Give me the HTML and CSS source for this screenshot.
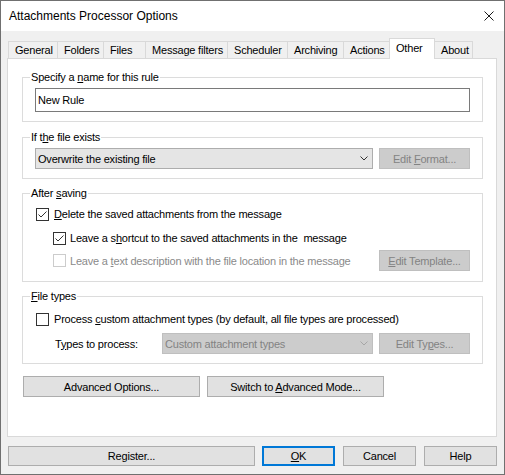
FILE: index.html
```html
<!DOCTYPE html>
<html>
<head>
<meta charset="utf-8">
<link rel="stylesheet" href="styles.css">
</head>
<body>
<div class="window">
  <div class="titlebar">
    <span class="title">Attachments Processor Options</span>
    <svg class="close" width="10" height="10" viewBox="0 0 10 10"><path d="M0.5 0.5L9.5 9.5M9.5 0.5L0.5 9.5" stroke="#1a1a1a" stroke-width="1"/></svg>
  </div>
  <div class="client">
    <div class="tabs">
      <div class="tab t-general">General</div>
      <div class="tab t-folders">Folders</div>
      <div class="tab t-files">Files</div>
      <div class="tab t-filters">Message filters</div>
      <div class="tab t-sched">Scheduler</div>
      <div class="tab t-arch">Archiving</div>
      <div class="tab t-actions">Actions</div>
      <div class="tab t-other active">Other</div>
      <div class="tab t-about">About</div>
    </div>
    <div class="panel">
      <div class="group g-name">
        <div class="group-label">Specify a <u>n</u>ame for this rule</div>
        <input class="field" type="text" value="New Rule">
      </div>
      <div class="group g-exists">
        <div class="group-label">If t<u>h</u>e file exists</div>
        <div class="row first-row">
          <div class="combo combo-wide"><span>Overwrite the existing file</span><svg class="arrow" width="8" height="5" viewBox="0 0 8 5"><path d="M0.5 0.5L4 4L7.5 0.5" fill="none" stroke="#333" stroke-width="1"/></svg></div>
          <div class="btn disabled side-btn"><span>Edit <u>F</u>ormat...</span></div>
        </div>
      </div>
      <div class="group g-after">
        <div class="group-label">After <u>s</u>aving</div>
        <div class="check r1">
          <svg class="box" width="13" height="13" viewBox="0 0 13 13"><rect x="0.5" y="0.5" width="12" height="12" fill="#fff" stroke="#333"/><path d="M2.5 6.5L5 9L10.5 3.5" fill="none" stroke="#333" stroke-width="1"/></svg>
          <span><u>D</u>elete the saved attachments from the message</span>
        </div>
        <div class="check indent r2">
          <svg class="box" width="13" height="13" viewBox="0 0 13 13"><rect x="0.5" y="0.5" width="12" height="12" fill="#fff" stroke="#333"/><path d="M2.5 6.5L5 9L10.5 3.5" fill="none" stroke="#333" stroke-width="1"/></svg>
          <span>Leave a s<u>h</u>ortcut to the saved attachments in the&nbsp; message</span>
        </div>
        <div class="check indent r3">
          <svg class="box" width="13" height="13" viewBox="0 0 13 13"><rect x="0.5" y="0.5" width="12" height="12" fill="#fff" stroke="#cccccc"/></svg>
          <span class="dis-text">Leave a <u>t</u>ext description with the file location in the message</span>
          <div class="btn disabled side-btn"><span><u>E</u>dit Template...</span></div>
        </div>
      </div>
      <div class="group g-types">
        <div class="group-label"><u>F</u>ile types</div>
        <div class="check r1t">
          <svg class="box" width="13" height="13" viewBox="0 0 13 13"><rect x="0.5" y="0.5" width="12" height="12" fill="#fff" stroke="#333"/></svg>
          <span>Process <u>c</u>ustom attachment types (by default, all file types are processed)</span>
        </div>
        <div class="row r2t">
          <span class="types-label">T<u>y</u>pes to process:</span>
          <div class="combo combo-dis"><span>Custom attachment types</span><svg class="arrow" width="8" height="5" viewBox="0 0 8 5"><path d="M0.5 0.5L4 4L7.5 0.5" fill="none" stroke="#a6a6a6" stroke-width="1"/></svg></div>
          <div class="btn disabled side-btn"><span>Edit Ty<u>p</u>es...</span></div>
        </div>
      </div>
      <div class="adv-row">
        <div class="btn adv-btn"><span>Advanced Options...</span></div>
        <div class="btn adv-btn"><span>Switch to <u>A</u>dvanced Mode...</span></div>
      </div>
    </div>
    <div class="footer">
      <div class="btn foot-btn register"><span>Register...</span></div>
      <div class="btn foot-btn default"><span><u>O</u>K</span></div>
      <div class="btn foot-btn"><span>Cancel</span></div>
      <div class="btn foot-btn"><span>Help</span></div>
    </div>
  </div>
</div>
</body>
</html>
```
FILE: styles.css
```css
body {
  margin: 0;
  font-family: "Liberation Sans", Arial, sans-serif;
  font-size: 11px;
  letter-spacing: -0.2px;
  color: #000;
}
u { text-decoration: underline; text-underline-offset: 1px; }

.window {
  width: 505px;
  height: 475px;
  box-sizing: border-box;
  border: 1px solid #707070;
  background: #f0f0f0;
  display: flex;
  flex-direction: column;
}
.titlebar {
  height: 30px;
  flex: none;
  background: #fff;
  display: flex;
  align-items: center;
  padding-left: 8px;
}
.title { font-size: 12px; letter-spacing: 0; }
.close { margin-left: auto; margin-right: 10px; }

.client { padding: 7px 0 0 6px; }

.tabs {
  display: flex;
  align-items: flex-end;
  height: 20px;
  margin-left: 1px;
}
.tab {
  box-sizing: border-box;
  height: 17px;
  border: 1px solid #d9d9d9;
  border-bottom: none;
  background: #f0f0f0;
  padding-left: 6px;
  line-height: 16px;
  margin-left: -1px;
  white-space: nowrap;
}
.t-general { margin-left: 0; width: 50px; }
.t-folders { width: 47px; }
.t-files { width: 43px; }
.t-filters { width: 83px; }
.t-sched { width: 61px; }
.t-arch { width: 57px; }
.t-actions { width: 47px; }
.t-other { width: 46px; }
.t-about { width: 39px; }
.tab.active {
  height: 21px;
  background: #fff;
  margin-bottom: -1px;
  line-height: 18px;
  position: relative;
  z-index: 1;
}

.panel {
  box-sizing: border-box;
  width: 490px;
  height: 379px;
  border: 1px solid #d9d9d9;
  background: #fff;
  padding: 18px 13px 0 14px;
}
.group {
  border: 1px solid #dcdcdc;
  padding: 0 12px 9px;
}
.g-exists { margin-top: 15px; }
.g-after { margin-top: 14px; padding-bottom: 10px; }
.g-types { margin-top: 14px; }
.group-label {
  margin: -8px 0 0 -5px;
  padding: 0 1px;
  width: fit-content;
  background: #fff;
  line-height: 15px;
}
.field {
  display: block;
  width: 100%;
  box-sizing: border-box;
  height: 24px;
  margin: 3px 0 0;
  border: 1px solid #7a7a7a;
  padding: 0 0 0 2px;
  font: inherit;
  letter-spacing: inherit;
  color: #000;
  outline: none;
}
.row { display: flex; align-items: center; }
.first-row { margin-top: 3px; align-items: flex-start; }
.combo {
  box-sizing: border-box;
  height: 21px;
  border: 1px solid #adadad;
  background: #e5e5e5;
  display: flex;
  align-items: center;
  padding: 0 4px 0 2px;
  flex: none;
  white-space: nowrap;
}
.combo-wide { width: 338px; }
.combo-dis {
  width: 211px;
  background: #cccccc;
  border-color: #bfbfbf;
  color: #838383;
}
.arrow { margin-left: auto; }
.btn {
  box-sizing: border-box;
  height: 21px;
  border: 1px solid #adadad;
  background: #e1e1e1;
  display: flex;
  align-items: center;
  justify-content: center;
  white-space: nowrap;
  flex: none;
}
.btn.disabled {
  background: #cccccc;
  border-color: #bfbfbf;
  color: #838383;
}
.side-btn { width: 91px; margin-left: auto; }

.check {
  display: flex;
  align-items: center;
  height: 16px;
  white-space: nowrap;
}
.box { flex: none; margin: 0 5px 0 1px; }
.indent { margin-left: 17px; }
.indent .box { margin-right: 4px; }
.r1 { margin-top: 5px; }
.r2 { margin-top: 8px; }
.r3 { margin-top: 4px; height: 21px; }
.dis-text { color: #8a8a8a; }
.r1t { margin-top: 7px; }
.r2t { margin-top: 6px; height: 21px; }
.types-label { width: 107px; margin-left: 20px; flex: none; }

.adv-row {
  display: flex;
  gap: 7px;
  margin: 12px 0 0 1px;
}
.adv-btn { width: 177px; }

.footer {
  display: flex;
  gap: 8px;
  margin: 9px 0 0 1px;
}
.foot-btn { width: 73px; height: 20px; }
.register { width: 247px; margin-right: -1px; }
.default { border: 2px solid #0078d7; }
```
